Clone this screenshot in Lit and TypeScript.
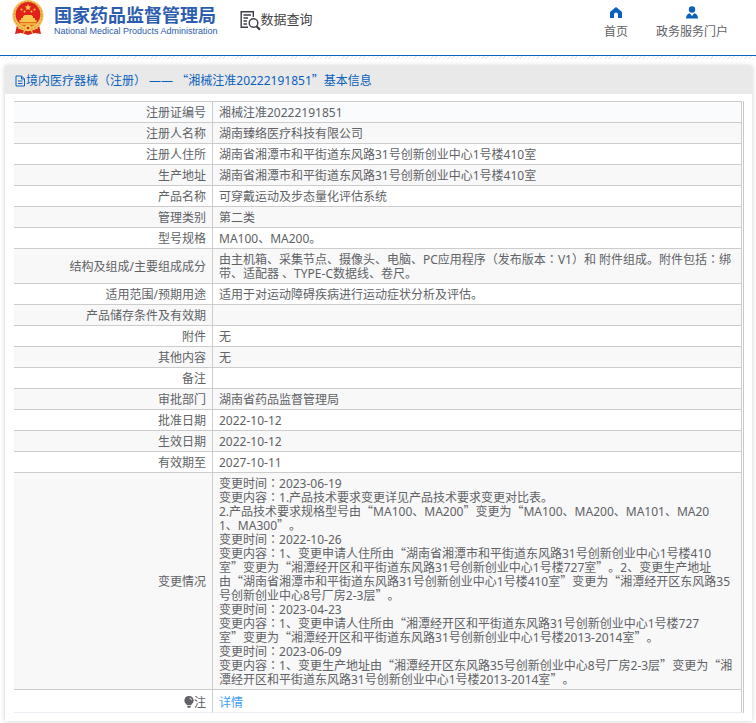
import { LitElement, html, css, svg } from "lit";
import { customElement, property } from "lit/decorators.js";

const PARTS = /([“”：]|[^“”：]+)/g;

/** Splits mixed text so that quotes and colons are set full width. */
const mixed = (text: string) =>
  (text.match(PARTS) ?? []).map((part) =>
    part === "："
      ? html`<span class="colon">${part}</span>`
      : part === "“" || part === "”"
        ? html`<span class="quote">${part}</span>`
        : part
  );

const CHANGES = [
  "变更时间：2023-06-19",
  "变更内容：1.产品技术要求变更详见产品技术要求变更对比表。",
  "2.产品技术要求规格型号由“MA100、MA200”变更为“MA100、MA200、MA101、MA20\n1、MA300”。",
  "变更时间：2022-10-26",
  "变更内容：1、变更申请人住所由“湖南省湘潭市和平街道东风路31号创新创业中心1号楼410\n室”变更为“湘潭经开区和平街道东风路31号创新创业中心1号楼727室”。2、变更生产地址\n由“湖南省湘潭市和平街道东风路31号创新创业中心1号楼410室”变更为“湘潭经开区东风路35\n号创新创业中心8号厂房2-3层”。",
  "变更时间：2023-04-23",
  "变更内容：1、变更申请人住所由“湘潭经开区和平街道东风路31号创新创业中心1号楼727\n室”变更为“湘潭经开区和平街道东风路31号创新创业中心1号楼2013-2014室”。",
  "变更时间：2023-06-09",
  "变更内容：1、变更生产地址由“湘潭经开区东风路35号创新创业中心8号厂房2-3层”变更为“湘\n潭经开区和平街道东风路31号创新创业中心1号楼2013-2014室”。",
].join("\n");

const ROWS: [string, string][] = [
  ["注册证编号", "湘械注准20222191851"],
  ["注册人名称", "湖南臻络医疗科技有限公司"],
  ["注册人住所", "湖南省湘潭市和平街道东风路31号创新创业中心1号楼410室"],
  ["生产地址", "湖南省湘潭市和平街道东风路31号创新创业中心1号楼410室"],
  ["产品名称", "可穿戴运动及步态量化评估系统"],
  ["管理类别", "第二类"],
  ["型号规格", "MA100、MA200。"],
  ["结构及组成/主要组成成分", "由主机箱、采集节点、摄像头、电脑、PC应用程序（发布版本：V1）和 附件组成。附件包括：绑带、适配器 、TYPE-C数据线、卷尺。"],
  ["适用范围/预期用途", "适用于对运动障碍疾病进行运动症状分析及评估。"],
  ["产品储存条件及有效期", ""],
  ["附件", "无"],
  ["其他内容", "无"],
  ["备注", ""],
  ["审批部门", "湖南省药品监督管理局"],
  ["批准日期", "2022-10-12"],
  ["生效日期", "2022-10-12"],
  ["有效期至", "2027-10-11"],
  ["变更情况", CHANGES],
];

const emblem = svg`
  <path d="M5 25 3 34 9 33 16 35 23 33 29 34 27 25Z" fill="#d9251c"/>
  <path d="M6 28 13 30 11 34M26 28 19 30 21 34" fill="none" stroke="#f0bd48" stroke-width="1.3"/>
  <circle cx="16" cy="15.5" r="15.5" fill="#f3c45a"/>
  <circle cx="16" cy="15.5" r="14" fill="none" stroke="#d98a2b" stroke-width="1" stroke-dasharray="2 1.4"/>
  <circle cx="16" cy="14.5" r="12.4" fill="#e0221b"/>
  <path d="m16 4 .9 2.3 2.5.1-2 1.5.7 2.4-2.1-1.4-2.1 1.4.7-2.4-2-1.5 2.5-.1Z" fill="#f8cf4b"/>
  <g fill="#f8cf4b"><circle cx="9.5" cy="9.5" r="1"/><circle cx="12.5" cy="11.5" r="1"/><circle cx="19.5" cy="11.5" r="1"/><circle cx="22.5" cy="9.5" r="1"/></g>
  <path d="M11 16.5 12.5 15h7l1.5 1.5v1.5h2v2h1.5v2h-17v-2H9v-2h2Z" fill="#f6c64e"/>
  <path d="M7 22.5h18l-2 3H9Z" fill="#eeb03a"/>
  <circle cx="16" cy="28" r="3.2" fill="#f6c64e"/><circle cx="16" cy="28" r="1.3" fill="#d9251c"/>`;

@customElement("site-header")
export class SiteHeader extends LitElement {
  static styles = css`
    :host { display: block; }
    .bar {
      display: flex;
      justify-content: space-between;
      height: 56px;
      box-sizing: border-box;
      padding: 0 28px 0 12px;
      border-bottom: 1px solid #0960bd;
      background: #fff;
    }
    .left, .brand, .query, .nav { display: flex; }
    .left { align-items: flex-start; gap: 22px; }
    .brand { gap: 10px; color: #2c5cae; text-decoration: none; }
    .emblem { width: 32px; height: 36px; display: block; }
    .names { display: flex; flex-direction: column; padding-top: 4px; }
    .zh { font: bold 18px/20px "Noto Sans CJK SC", sans-serif; white-space: nowrap; }
    .en { font: 9px/15px "Liberation Sans", Arial, sans-serif; white-space: nowrap; }
    .query {
      align-items: center;
      padding-top: 9px;
      color: #444;
      text-decoration: none;
      font: 13px/20px "Noto Sans CJK SC", sans-serif;
    }
    .query svg { width: 21px; height: 21px; }
    .query span { padding-bottom: 3px; }
    .nav { gap: 28px; padding-top: 6px; }
    .item {
      display: flex;
      flex-direction: column;
      align-items: center;
      color: #606266;
      text-decoration: none;
      font: 12px/18px "Noto Sans", "Noto Sans CJK SC", sans-serif;
      gap: 4px;
    }
    .item svg { width: 14px; height: 13px; display: block; }
    .hatch {
      height: 3px;
      background: repeating-linear-gradient(135deg, #ececec 0 1px, #fff 1px 3px);
    }
  `;
  render() {
    return html`
      <header>
        <div class="bar">
          <div class="left">
            <a class="brand" href="#">
              <svg class="emblem" viewBox="0 0 32 36" aria-hidden="true">${emblem}</svg>
              <span class="names">
                <span class="zh">国家药品监督管理局</span>
                <span class="en">National Medical Products Administration</span>
              </span>
            </a>
            <a class="query" href="#">
              <svg viewBox="0 0 21 21" fill="none" stroke="#3d3d45" stroke-width="1.4" aria-hidden="true">
                <path d="M8 17.3H1.2V1.7H13.3V7M3.5 5h7.5M3.5 8h4.5M3.5 11h3.5M3.5 14h3.5"/>
                <circle cx="13.5" cy="13" r="4.3"/><path d="m16.5 16.3 3.5 3.5" stroke-width="2.2"/>
              </svg><span>数据查询</span></a>
          </div>
          <nav class="nav">
            <a class="item" href="#">
              <svg viewBox="0 0 14 13" aria-hidden="true"><path d="M7 1 13 6V12H9V8.5a2 2 0 0 0-4 0V12H1V6Z" fill="#0960bd"/></svg>首页</a>
            <a class="item" href="#">
              <svg viewBox="0 0 14 13" aria-hidden="true"><circle cx="7" cy="3.5" r="3.2" fill="#0960bd"/><path d="M1 12.5C1 9.5 2.5 7.8 4.8 7.3L7 10 9.2 7.3C11.5 7.8 13 9.5 13 12.5Z" fill="#0960bd"/></svg>政务服务门户</a>
          </nav>
        </div>
        <div class="hatch"></div>
      </header>`;
  }
}

@customElement("record-table")
export class RecordTable extends LitElement {
  @property({ attribute: false }) rows: [string, string][] = [];
  static styles = css`
    :host { display: block; }
    .frame { border-right: 1px solid #c6c6ce; padding-right: 1px; }
    .table {
      width: 100%;
      table-layout: fixed;
      border-collapse: separate;
      border-spacing: 0;
      border-top: 1px solid #ccc;
      color: #606266;
      font: 12px/14px "Noto Sans", "Noto Sans CJK SC", sans-serif;
      text-spacing-trim: space-all;
    }
    .label, .value {
      padding: 4px 6px 2px;
      border-right: 1px solid #ccc;
      border-bottom: 1px solid #ccc;
      height: 14px;
      font-weight: normal;
    }
    .label { width: 186px; text-align: right; }
    .value { text-align: left; white-space: pre-line; line-break: strict; }
    .row:nth-child(even) { background: #f8f8f8; }
    .row:first-child { background: #f9fbfd; }
    .note { background: #fff; }
    .note .label, .note .value { padding-top: 6px; border-bottom-color: #ebeef5; }
    .quote, .colon { line-height: 1px; }
    .quote { font-family: "Noto Sans CJK SC", sans-serif; }
    .colon { font-family: "Noto Sans CJK TC", sans-serif; }
    .link { color: #409eff; text-decoration: none; }
    .bulb { width: 10px; height: 12px; vertical-align: -1px; }
  `;
  render() {
    return html`
      <div class="frame">
        <table class="table">
          <tbody>
            ${this.rows.map(
              ([label, value]) => html`<tr class="row"><th class="label" scope="row">${label}</th><td class="value">${mixed(value)}</td></tr>`
            )}
            <tr class="row note">
              <th class="label" scope="row"><svg class="bulb" viewBox="0 0 10 12" aria-hidden="true"><path d="M5 0a4.5 4.5 0 0 1 2.500 8.300V9h-5v-.7A4.500 4.500 0 0 1 5 0ZM3 9.700h4l-.7 2H3.700Z" fill="#606266"/><path d="M5.500 2q2 .3 2 2.200" fill="none" stroke="#fff" stroke-width=".8"/></svg>注</th>
              <td class="value"><a class="link" href="#">详情</a></td>
            </tr>
          </tbody>
        </table>
      </div>`;
  }
}

@customElement("app-root")
export class AppRoot extends LitElement {
  static styles = css`
    :host { display: block; min-height: 100vh; background: #fff; }
    .panel {
      margin: 7px 4px 0 5px;
      background: #fff;
      box-shadow: 0 0 5px rgba(0, 0, 0, 0.2);
    }
    .title {
      display: flex;
      align-items: center;
      margin: 0;
      height: 28px;
      box-sizing: border-box;
      padding: 2px 0 0 10px;
      background: #e9e9e9;
      color: #0960bd;
      font: 12px/26px "Noto Sans", "Noto Sans CJK SC", sans-serif;
      white-space: pre;
      text-spacing-trim: space-all;
    }
    .title svg { width: 11px; height: 12px; }
    .quote { font-family: "Noto Sans CJK SC", sans-serif; line-height: 1px; }
    .body { padding: 7px 8px 8px 9px; }
  `;
  render() {
    return html`
      <site-header></site-header>
      <main class="panel">
        <h1 class="title"><svg viewBox="0 0 11 12" fill="none" stroke="#0960bd" aria-hidden="true"><path d="M1 1H6.5L9.5 4V11H1ZM6.5 1V4H9.5M3 6h4.5M3 8.5h4.5"/></svg><span>境内医疗器械（注册） —— ${mixed("“湘械注准20222191851”")}基本信息</span></h1>
        <div class="body"><record-table .rows=${ROWS}></record-table></div>
      </main>`;
  }
}
